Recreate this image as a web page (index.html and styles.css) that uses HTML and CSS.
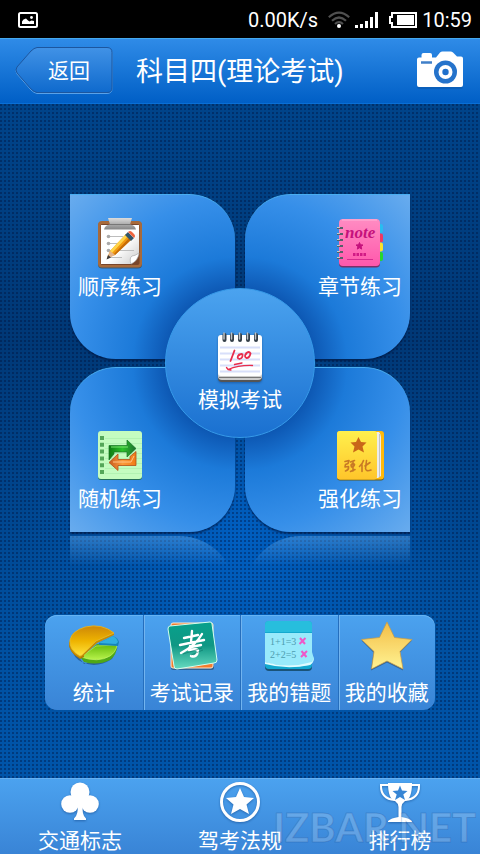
FILE: index.html
```html
<!DOCTYPE html>
<html lang="zh-CN">
<head>
<meta charset="utf-8">
<meta name="viewport" content="width=device-width, initial-scale=1">
<title>科目四(理论考试)</title>
<link rel="stylesheet" href="styles.css">
</head>
<body>
<div class="status">
  <svg class="status-photo" width="20" height="16" viewBox="0 0 20 16" aria-hidden="true">
    <rect x="1" y="1" width="18" height="14" rx="1.5" fill="none" stroke="#fff" stroke-width="2"/>
    <path d="M4 12V9.500L5.500 7.500 8 6.500 10 8.500 11.500 9.500 13.500 8.500 16 9V12Z" fill="#fff"/>
    <circle cx="13.500" cy="5.500" r="1.400" fill="#fff"/>
  </svg>
  <div class="status-right">
    <span class="speed">0.00K/s</span>
    <svg width="22" height="18" viewBox="0 0 22 18" aria-hidden="true">
      <g fill="none" stroke="#505050" stroke-width="2.200">
        <path d="M.8 6.200Q11-3 21.200 6.200"/><path d="M4 9.800Q11 3.200 18 9.800"/><path d="M7 13Q11 9.400 15 13"/>
      </g>
      <circle cx="11" cy="15" r="2" fill="#fff"/>
    </svg>
    <svg width="24" height="16" viewBox="0 0 24 16" aria-hidden="true">
      <path d="M0 13h3v3H0zM5 12h3v4H5zM10 9h3v7h-3zM15 5h3v11h-3zM20 0h3v16h-3z" fill="#fff"/>
    </svg>
    <svg class="battery" width="28" height="16" viewBox="0 0 28 16" aria-hidden="true">
      <path d="M3 1h24v14H3V11H1V5h2z" fill="none" stroke="#fff" stroke-width="2"/>
      <rect x="8" y="3" width="17" height="10" fill="#fff"/>
    </svg>
    <span>10:59</span>
  </div>
</div>

<header class="header">
  <button class="back" type="button">
    <svg class="back-shape" width="98" height="47" viewBox="0 0 98 47" aria-hidden="true">
      <defs><linearGradient id="bk" x1="0" y1="0" x2="0" y2="1"><stop offset="0" stop-color="#4192e6"/><stop offset="1" stop-color="#0f6acd"/></linearGradient></defs>
      <path d="M22 1.500H92Q97 1.500 97 6.500V41.500Q97 46.500 92 46.500H22Q19 46 16 43L2 27Q0 24 2 21L16 5Q19 2 22 1.500Z" fill="none" stroke="#5aa2e8"/>
      <path d="M22 .5H92Q97 .5 97 5.500V40.500Q97 45.500 92 45.500H22Q19 45 16 42L2 26Q0 23 2 20L16 4Q19 1 22 .5Z" fill="url(#bk)" stroke="#1c569f"/>
    </svg>
    <span>返回</span>
  </button>
  <h1>科目四(理论考试)</h1>
  <button class="camera" type="button" aria-label="拍照">
    <svg width="48" height="38" viewBox="0 0 48 38" aria-hidden="true">
      <path d="M3 7.500H5.500V5Q5.500 3 7.500 3H14Q16 3 16 5V7.500H20L24 2.500Q25 1.500 26.500 1.500H34.500Q36 1.500 37 2.500L41 6.500H45Q47 6.500 47 8.500V35Q47 37 45 37H3Q1 37 1 35V9.500Q1 7.500 3 7.500Z" fill="#0b4f9e" opacity=".4" transform="translate(0 1)"/>
      <path d="M3 6.500H5.500V4Q5.500 2 7.500 2H14Q16 2 16 4V6.500H20L24 1.500Q25 .5 26.500 .5H34.500Q36 .5 37 1.500L41 5.500H45Q47 5.500 47 7.500V34Q47 36 45 36H3Q1 36 1 34V8.500Q1 6.500 3 6.500Z" fill="#fff"/>
      <path d="M5 11.500H16" stroke="#3f7fc8" stroke-width="2.500"/>
      <circle cx="29.500" cy="21" r="11.500" fill="#2573cb"/>
      <circle cx="29.500" cy="21" r="7" fill="#fff"/>
      <circle cx="29.500" cy="21" r="3.200" fill="#1f70cc"/>
    </svg>
  </button>
</header>

<main class="main">
  <nav class="pad" aria-label="练习">
    <a class="tile tile-nw" href="#order">
      <span class="item">
        <svg width="48" height="52" viewBox="0 0 48 52" aria-hidden="true">
          <defs>
            <linearGradient id="cl" x1="0" y1="0" x2="0" y2="1"><stop offset="0" stop-color="#dcdcdc"/><stop offset="1" stop-color="#858585"/></linearGradient>
            <linearGradient id="pp" x1="0" y1="0" x2="1" y2="1"><stop offset=".55" stop-color="#fff"/><stop offset="1" stop-color="#c9c9c9"/></linearGradient>
          </defs>
          <rect x="2" y="5" width="44" height="46.500" rx="4" fill="#45351f" opacity=".6"/>
          <rect x="2" y="4" width="44" height="46.500" rx="4" fill="#a76a3b"/>
          <rect x="4.500" y="7" width="39" height="41" rx="2" fill="#79452a"/>
          <path d="M5 8H43V37L35 47H5Z" fill="url(#pp)"/>
          <path d="M35 47Q33 41 36 39Q39 39 43 36Q42 44 35 47Z" fill="#fff" stroke="#aaa" stroke-width=".7"/>
          <path d="M8 12.500Q9 8 14 7.500L12 1H36L34 7.500Q39 8 40 12.500Z" fill="url(#cl)"/>
          <path d="M14 7.500H34" stroke="#777"/>
          <path d="M14 19.500H27M14 26.500H22M14 33.500H38M14 40.500H26" stroke="#bdbdbd"/>
          <g fill="#aaa"><circle cx="12.500" cy="19.500" r="1.800"/><circle cx="12.500" cy="26.500" r="1.800"/><circle cx="12.500" cy="33.500" r="1.800"/></g>
          <path d="M11 41L14 34 30 17 36 22 19 38Z" fill="#f29a12"/>
          <path d="M14 34L30 17 32 19 16 36Z" fill="#ffd44a"/><path d="M18 37L34 20 36 22 19 38Z" fill="#c66c08"/>
          <path d="M29 18L32 15 38 21 35 24Z" fill="#31556a"/><path d="M32 15L34.500 15 38 19 38 21Z" fill="#d6e3e8"/>
          <path d="M32 15Q34 13 36 15L38 17Q40 19 38 21Z" fill="#ef6540"/>
          <path d="M14 34L19 38 11 42Z" fill="#e3b48c"/><path d="M12 38L15 40.500 10.500 42.500Z" fill="#3a3838"/>
        </svg>
        <span>顺序练习</span>
      </span>
    </a>
    <a class="tile tile-ne" href="#chapter">
      <span class="item">
        <svg width="48" height="52" viewBox="0 0 48 52" aria-hidden="true">
          <defs><linearGradient id="pk" x1="0" y1="0" x2="0" y2="1"><stop offset="0" stop-color="#ff8cc2"/><stop offset="1" stop-color="#ff58ac"/></linearGradient></defs>
          <rect x="40" y="7" width="7" height="9" rx="2" fill="#28bdf0"/><rect x="40" y="16.500" width="7" height="9" rx="2" fill="#ef3763"/><rect x="40" y="25.500" width="7" height="9" rx="2" fill="#f8e22c"/><rect x="40" y="35" width="7" height="9" rx="2" fill="#28d52e"/>
          <rect x="3" y="3.500" width="41" height="47" rx="4" fill="#7a2f68"/>
          <rect x="3" y="2" width="41" height="47" rx="4" fill="url(#pk)"/>
          <path d="M6 3H41" stroke="#ffb3d7"/>
          <path d="M1 11H7M1 17H7M1 23H7M1 29H7M1 35H7M1 41H7" stroke="#55606a" stroke-width="2"/>
          <path d="M1 10.500H4M1 16.500H4M1 22.500H4M1 28.500H4M1 34.500H4M1 40.500H4" stroke="#c0c6ca"/>
          <text class="art-note" x="9" y="21">note</text>
          <path d="M23.500 25.500l1 2.300 2.500.2-1.900 1.600.6 2.500-2.200-1.300-2.200 1.300.6-2.500-1.900-1.600 2.500-.2z" fill="#c5117c" stroke="#c5117c"/>
          <path d="M17 37.500H30" stroke="#d11a85" stroke-width="3" stroke-dasharray="2.500 1"/>
          <path d="M11 42.500H37" stroke="#d82b8e"/>
        </svg>
        <span>章节练习</span>
      </span>
    </a>
    <a class="tile tile-sw" href="#random">
      <span class="item">
        <svg width="48" height="52" viewBox="0 0 48 52" aria-hidden="true">
          <defs>
            <linearGradient id="gr" x1="0" y1="0" x2="1" y2="0"><stop offset="0" stop-color="#0d7a12"/><stop offset=".5" stop-color="#2bc32a"/><stop offset="1" stop-color="#1c6d2f"/></linearGradient>
            <linearGradient id="or" x1="0" y1="0" x2="1" y2="0"><stop offset="0" stop-color="#c7591f"/><stop offset=".5" stop-color="#fb9a3c"/><stop offset="1" stop-color="#f07c15"/></linearGradient>
          </defs>
          <rect x="2" y="3" width="44" height="48" rx="3" fill="#24705a"/>
          <rect x="2" y="2" width="44" height="48" rx="3" fill="#c4fcc0"/>
          <path d="M9 9.500H46M9 14.500H46M9 19.500H46M9 24.500H46M9 29.500H46M9 34.500H46M9 39.500H46M9 44.500H46" stroke="#b2f3b2"/>
          <path d="M4 9H8M4 15.800H8M4 22.600H8M4 29.400H8M4 36.200H8M4 43H8" stroke="#54a759" stroke-width="4"/>
          <path d="M13 31V16.500H31V11L40 19.500 31 28V23H18V25Z" fill="url(#gr)" stroke="#187426" stroke-width=".7"/>
          <path d="M15 18H32" stroke="#79e170"/>
          <path d="M40 22.500V36.500H22V41.500L13 33.500 22 25V30.500H34V27.500Z" fill="url(#or)" stroke="#b34e17" stroke-width=".8"/>
          <path d="M17 33H35L38 27" fill="none" stroke="#ffc487"/>
        </svg>
        <span>随机练习</span>
      </span>
    </a>
    <a class="tile tile-se" href="#intensive">
      <span class="item">
        <svg width="48" height="52" viewBox="0 0 48 52" aria-hidden="true">
          <defs><linearGradient id="yl" x1="0" y1="0" x2="0" y2="1"><stop offset="0" stop-color="#fff04d"/><stop offset="1" stop-color="#ffc52a"/></linearGradient></defs>
          <rect x="1" y="3" width="47" height="48.500" rx="3" fill="#5d5a25"/>
          <rect x="1" y="2" width="47" height="48.500" rx="3" fill="#ffb90b"/>
          <path d="M38 3H43Q45 5 45 8V47L42 49H38Z" fill="#ececec"/><path d="M43.500 5V48" stroke="#c3c3c3"/>
          <rect x="1" y="2" width="40" height="48.500" rx="3" fill="url(#yl)"/>
          <path d="M22.500 8l2.500 5 5.500.5-4 4 1.500 6-5.500-3-5.500 3 1.500-6-4-4 5.500-.5z" fill="#c96619"/>
          <g fill="none" stroke="#c87925" stroke-width="1.600" stroke-linecap="round" stroke-linejoin="round">
            <path d="M9 32.500L13 31.500 12 34.500 9.500 35.500 9 38 12.500 37.500Q13 41 9.500 42M14.500 33L18.500 31.500M15 36Q17 33.500 18.500 35.500Q18 38 15.500 38ZM17 33V42M14.500 42.500L19 40.500"/>
            <path d="M27.500 31.500Q26.500 35 23.500 37.500M26 35.500V42.500M34 33.500L29 37M30.500 31.500L29.500 39.500Q30 43 35 41"/>
          </g>
        </svg>
        <span>强化练习</span>
      </span>
    </a>
    <a class="exam" href="#exam">
      <svg width="48" height="52" viewBox="0 0 48 52" aria-hidden="true">
        <rect x="2" y="10" width="44" height="42" rx="4" fill="#555"/><rect x="2" y="8" width="44" height="42" rx="4" fill="#ccc"/><path d="M3 47.500H45" stroke="#777"/>
        <rect x="2" y="5" width="44" height="41" rx="3" fill="#fff"/>
        <path d="M4 17.500H44M4 23.500H44M4 29.500H44M4 35.500H44M4 41.500H44" stroke="#d8dffa" stroke-width="2"/>
        <g stroke="#333e47" stroke-width="4" stroke-linecap="round"><path d="M8.500 5V10M16 5V10M24 5V10M32 5V10M40 5V10"/></g>
        <g stroke="#bfc4c8" stroke-width="1.500" stroke-linecap="round"><path d="M8 3V9M15.500 3V9M23.500 3V9M31.500 3V9M39.500 3V9"/></g>
        <g fill="none" stroke="#e82c4b" stroke-linecap="round">
          <path d="M18.500 20.500L14.500 31" stroke-width="1.800"/><path d="M22 26Q25 23 26.500 24.500Q27 28 23.500 29Q20 28 23 24.500M30 23.500Q33 20.500 34.500 23.500Q33.500 28 30.500 28Q27.500 26 30.500 23.500" stroke-width="1.800"/>
          <path d="M18.500 34.500L26 33M36.500 35.500Q23 35 12 39.500L10.500 37.500M12 39.500L15 40" stroke-width="1.300"/>
        </g>
      </svg>
      <span>模拟考试</span>
    </a>
  </nav>
  <div class="mirror" aria-hidden="true"><i class="mirror-left"></i><i class="mirror-right"></i></div>

  <nav class="tools" aria-label="我的">
    <a class="tool" href="#stats">
      <svg width="56" height="52" viewBox="0 0 56 52" aria-hidden="true">
        <defs>
          <linearGradient id="pg" x1="0" y1="0" x2="0" y2="1"><stop offset="0" stop-color="#cd8708"/><stop offset=".5" stop-color="#eeb300"/><stop offset="1" stop-color="#ffe33d"/></linearGradient>
          <linearGradient id="pn" x1="0" y1="0" x2="0" y2="1"><stop offset="0" stop-color="#69bc09"/><stop offset="1" stop-color="#b8f34c"/></linearGradient>
        </defs>
        <path d="M4 26Q8 39 16 42Q30 49 46 39L52 27L45 35L18 44Z" fill="#1a3d65" opacity=".55"/>
        <path d="M15 38L18 42Q32 46 44 40Q51 35 51 25L31 24Z" fill="#4fa816"/>
        <path d="M15 37L30 26 51 25Q50 32 44 36Q32 43 15 37Z" fill="url(#pn)" stroke="#c3f267" stroke-width=".7"/>
        <path d="M33 23L47 16Q52 18 53 22L52 26 33 25Z" fill="#1684b8"/><path d="M33 23L47 16Q51 18 52 22L50 24Z" fill="#31afe0"/>
        <path d="M3 22Q2 32 14 39L18 37 17 31Z" fill="#aa7402"/>
        <path d="M14 38Q2 32 3.500 21Q5 11 19 7Q36 3 48 13L48 15 31 23 17 36Z" fill="#c78d00"/>
        <path d="M14 36Q3 30 4 20Q6 11 19 7Q36 3 48 13L30 21 16 35Z" fill="url(#pg)" stroke="#e6be38" stroke-width=".7"/>
      </svg>
      <span>统计</span>
    </a>
    <a class="tool" href="#records">
      <svg width="56" height="52" viewBox="0 0 56 52" aria-hidden="true">
        <defs><linearGradient id="te" x1="0" y1="0" x2="0" y2="1"><stop offset="0" stop-color="#07a18c"/><stop offset=".5" stop-color="#109784"/><stop offset="1" stop-color="#66dbc0"/></linearGradient></defs>
        <path d="M7 4H49L50 48Q50 50 48 50H9Q7 50 7 48Z" fill="#23415d" opacity=".6"/>
        <rect x="7" y="3" width="42" height="45" rx="2" fill="#f47c2d" stroke="#ffe7cc"/>
        <path d="M6 6L46 2Q48 2 48 4L53 40Q53 43 50 43L13 49Q10 49 10 46L4 9Q4 6 6 6Z" fill="url(#te)" stroke="#d2fff0"/>
        <g fill="none" stroke="#fff" stroke-width="2.400" stroke-linecap="round" stroke-linejoin="round"><path d="M20 18L34 15M28 11L27 22M16 25L40 20M38 14Q32 25 17 33M27 27L37 25M26 26L25 30Q34 28 34 31Q33 38 27 36"/></g>
        <path d="M19 34L38 28M27 35L39 30" stroke="#08685e" opacity=".5"/>
      </svg>
      <span>考试记录</span>
    </a>
    <a class="tool" href="#mistakes">
      <svg width="56" height="52" viewBox="0 0 56 52" aria-hidden="true">
        <rect x="4" y="3" width="47" height="48" rx="4" fill="#1a5378"/><rect x="4" y="1" width="47" height="48" rx="4" fill="#13a9cf"/>
        <path d="M4 12V5Q4 1 8 1H47Q51 1 51 5V12Z" fill="#27bedd"/>
        <path d="M4 13H51V32Q52 36 53 38Q53 43 49 45Q26 49 4 42Z" fill="#99eafb"/><path d="M4 42Q27 49 51 42L53 38Q52 43 49 45Q26 50 4 44Z" fill="#dffcff"/>
        <text class="art-sum" x="9" y="25">1+1=3</text><text class="art-sum" x="9" y="38">2+2=5</text>
        <path d="M39 18L44 24M44.500 18L38.500 24M40.500 31L45.500 37M46 31L40 37" stroke="#ef58c8" stroke-width="2"/>
      </svg>
      <span>我的错题</span>
    </a>
    <a class="tool" href="#favorites">
      <svg width="56" height="52" viewBox="0 0 56 52" aria-hidden="true">
        <defs><linearGradient id="st" x1="0" y1="0" x2="0" y2="1"><stop offset="0" stop-color="#f3bd45"/><stop offset="1" stop-color="#fff393"/></linearGradient></defs>
        <path d="M28 3L35.500 18.500 53 20.500 41 32.500 44 50.500 28 42.500 12 50.500 14.500 32.500 2.500 20.500 20.500 18.500Z" fill="#274667" opacity=".6"/>
        <path d="M28 2L35.500 17.500 53 19.500 41 31.500 44 49 28 41 12.500 49 15 31.500 2.500 19.500 20.500 17.500Z" fill="url(#st)" stroke="#c99b45" stroke-width=".7" stroke-linejoin="round"/>
      </svg>
      <span>我的收藏</span>
    </a>
  </nav>
</main>

<footer class="footer">
  <a class="tab" href="#signs">
    <svg width="44" height="44" viewBox="0 0 44 44" aria-hidden="true">
      <g fill="#fff"><circle cx="22" cy="12" r="9.500"/><circle cx="12" cy="24" r="8.800"/><circle cx="32" cy="24" r="8.800"/><path d="M17 17H27L25 25Q23.500 35 28 38.500V40H16V38.500Q20.500 35 19.500 25Z"/></g>
    </svg>
    <span>交通标志</span>
  </a>
  <a class="tab" href="#law">
    <svg width="44" height="44" viewBox="0 0 44 44" aria-hidden="true">
      <circle cx="22" cy="22" r="18.500" fill="none" stroke="#fff" stroke-width="3"/>
      <path d="M22 8L26 17 36 18 28.500 24.500 31 34 22 29 13 34 15.500 24.500 8 18 18 17Z" fill="#fff"/>
    </svg>
    <span>驾考法规</span>
  </a>
  <a class="tab" href="#rank">
    <svg width="44" height="44" viewBox="0 0 44 44" aria-hidden="true">
      <path d="M11 5H3Q2.500 19 17 20M33 5H41Q41.500 19 27 20" fill="none" stroke="#fff" stroke-width="2"/>
      <path d="M10 3H34Q34 19 27 21Q24 23 23.500 27V37Q31 38 34 41V42H10V41Q13 38 20.500 37V27Q20 23 17 21Q10 19 10 3Z" fill="#fff"/>
      <path d="M22 5.500L24 10.500 29.500 11 25.300 14.500 27 20 22 17 17 20 18.700 14.500 14.500 11 20 10.500Z" fill="#3785d4"/>
    </svg>
    <span>排行榜</span>
  </a>
  <span class="watermark">IZBAR.NET</span>
</footer>
</body>
</html>
```
FILE: styles.css
```css
* {
  box-sizing: border-box;
}

body {
  margin: 0;
  min-height: 100vh;
  display: flex;
  flex-direction: column;
  background: #00407f;
  color: #fff;
  font-family: Roboto, "Noto Sans CJK SC", sans-serif;
  font-size: 21px;
  line-height: 24px;
}

a {
  color: inherit;
  text-decoration: none;
}

button {
  margin: 0;
  padding: 0;
  border: 0;
  background: none;
  color: inherit;
  font: inherit;
}

svg {
  display: block;
  flex: none;
}

.status {
  display: flex;
  align-items: center;
  justify-content: space-between;
  height: 38px;
  padding: 2px 8px 0 18px;
  background: #000;
  font-size: 20px;
}

.status-right {
  display: flex;
  align-items: center;
  gap: 5px;
}

.speed {
  margin-right: 5px;
}

.battery {
  margin-left: 5px;
}

.header {
  display: flex;
  align-items: center;
  height: 66px;
  padding: 0 16px 2px 15px;
  border-top: 1px solid #45a9ee;
  border-bottom: 1px solid #0a6fd6;
  background: linear-gradient(#2f8be7, #005fc6);
}

.back {
  display: grid;
  place-items: center;
}

.back-shape,
.back span {
  grid-area: 1 / 1;
}

.back span {
  padding: 2px 0 0 10px;
}

.header h1 {
  flex: 1;
  margin: 0 0 0 23px;
  padding-top: 4px;
  font-size: 27px;
  line-height: 36px;
  font-weight: 400;
  white-space: nowrap;
}

.main {
  flex: 1;
  padding: 90px 20px 68px;
  background:
    radial-gradient(circle at 1px 1px, rgba(0, 12, 50, 0.36) 0, rgba(0, 12, 50, 0.36) 1px, transparent 1px) 0 0 / 4px 4px,
    radial-gradient(circle at 50% 430px, rgba(0, 104, 212, 0.7), transparent 220px),
    linear-gradient(#00448a, #003876 35%, #004f9e 75%, #0055aa);
}

.pad {
  display: grid;
  grid-template-columns: 165px 165px;
  grid-template-rows: 165px 165px;
  gap: 8px 10px;
  justify-content: center;
}

.tile {
  display: flex;
  padding: 22px 8px 21px;
  border-top: 1px solid #49adf0;
  box-shadow: 0 2px 2px rgba(0, 20, 60, 0.6);
}

.tile-nw {
  grid-area: 1 / 1;
  border-radius: 0 46px 0 46px;
  background: radial-gradient(circle at 100% 100%, #0a51ac 62px, #1c7ad9 102px, #368fe9 160px, #67abee 230px);
}

.tile-ne {
  grid-area: 1 / 2;
  justify-content: flex-end;
  border-radius: 46px 0 46px 0;
  background: radial-gradient(circle at 0 100%, #0a51ac 62px, #1c7ad9 102px, #368fe9 160px, #67abee 230px);
}

.tile-sw {
  grid-area: 2 / 1;
  align-items: flex-end;
  border-radius: 46px 0 46px 0;
  background: radial-gradient(circle at 100% 0, #0a51ac 62px, #1c7ad9 102px, #368fe9 160px, #67abee 230px);
}

.tile-se {
  grid-area: 2 / 2;
  align-items: flex-end;
  justify-content: flex-end;
  border-radius: 0 46px 0 46px;
  background: radial-gradient(circle at 0 0, #0a51ac 62px, #1c7ad9 102px, #368fe9 160px, #67abee 230px);
}

.item {
  display: flex;
  flex-direction: column;
  align-items: center;
  gap: 6px;
  white-space: nowrap;
}

.exam {
  grid-area: 1 / 1 / 3 / 3;
  place-self: center;
  z-index: 1;
  display: flex;
  flex-direction: column;
  align-items: center;
  gap: 6px;
  width: 150px;
  height: 150px;
  padding-top: 41px;
  border: 1px solid #369ae9;
  border-radius: 50%;
  background: linear-gradient(#4ba3ef, #1a70d0);
}

.mirror {
  display: grid;
  grid-template-columns: 165px 165px;
  gap: 10px;
  justify-content: center;
  height: 60px;
  margin-top: 4px;
}

.mirror-left {
  border-radius: 0 56px 0 0;
  background: linear-gradient(rgba(90, 165, 235, 0.5), transparent 30px);
}

.mirror-right {
  border-radius: 56px 0 0 0;
  background: linear-gradient(rgba(90, 165, 235, 0.5), transparent 30px);
}

.tools {
  display: grid;
  grid-template-columns: repeat(4, 1fr);
  max-width: 390px;
  margin: 19px auto 0;
  border-radius: 12px;
  background: linear-gradient(#4ba2ef, #3984d6);
  box-shadow: inset 0 1px #65b3f4;
}

.tool {
  display: flex;
  flex-direction: column;
  align-items: center;
  gap: 9px;
  padding: 5px 0;
  white-space: nowrap;
}

.tool + .tool {
  border-left: 1px solid #256ebd;
  box-shadow: inset 1px 0 #72b4ef;
}

.footer {
  position: relative;
  display: grid;
  grid-template-columns: repeat(3, 1fr);
  border-top: 1px solid #66b0f0;
  background: linear-gradient(#4ba2ef, #3984d6);
}

.tab {
  display: flex;
  flex-direction: column;
  align-items: center;
  gap: 5px;
  padding: 1px 0;
}

.tab svg,
.exam svg {
  filter: drop-shadow(0 1px 1px rgba(0, 40, 100, 0.4));
}

.watermark {
  position: absolute;
  right: 4px;
  bottom: 3px;
  color: rgba(255, 255, 255, 0.2);
  font: 700 40px/48px Lato, sans-serif;
  -webkit-text-stroke: 1px rgba(20, 70, 140, 0.25);
  pointer-events: none;
}

.art-note {
  fill: #c5117c;
  font: italic 700 17px "Liberation Serif", serif;
}

.art-sum {
  fill: #4d9caf;
  font: 10px "Liberation Serif", serif;
}
```
